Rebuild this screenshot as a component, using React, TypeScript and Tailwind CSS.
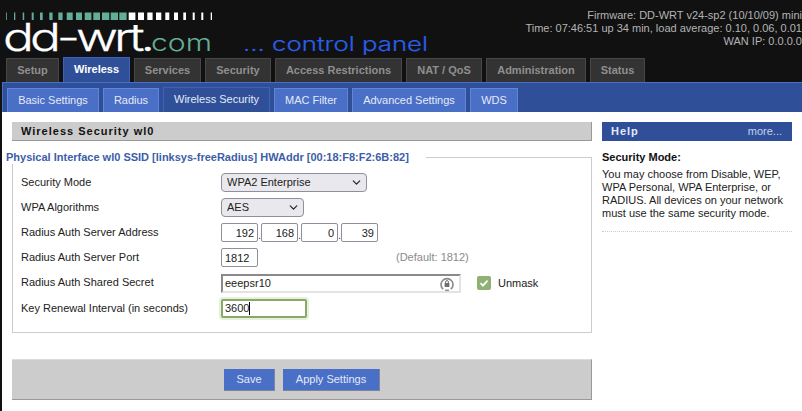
import React from "react";
import { ChevronDown } from "lucide-react";

const tealBars: [number, number][] = [[6,0.8],[14,1.3],[22.7,1.5],[31.7,2],[40,2.7],[49.3,3.3],[58.3,4.3],[66.7,6],[76,6],[84.7,6.7],[93.3,6.7],[102,7.3],[110.7,7.3],[119.3,7.3]];
const whiteBars: [number, number][] = [[128.7,6.7],[138,6],[147.3,5.3],[156,5.3],[165.3,4],[174,4],[183.3,2.7],[192.7,2],[201.3,2],[210.7,1.3]];

function Logo() {
  return (
    <svg width="440" height="57" className="block shrink-0 overflow-visible" style={{ fontFamily: "Inter, sans-serif" }}>
      {tealBars.map(([x, w]) => <rect key={x} x={x} y="12.5" width={w} height="7.5" fill="#62ae98" />)}
      {whiteBars.map(([x, w]) => <rect key={x} x={x} y="12.5" width={w} height="7.5" fill="#ffffff" />)}
      <text x="3" y="51" fontSize="38" fontWeight="300" letterSpacing="-3" fill="#ffffff" stroke="#ffffff" strokeWidth="0.3" textLength="148" lengthAdjust="spacingAndGlyphs">dd-wrt.</text>
      <text x="151" y="51" fontSize="23" fontWeight="300" fill="#62ae98" textLength="61" lengthAdjust="spacingAndGlyphs">com</text>
      <text x="243" y="50.5" fontSize="19.5" fontWeight="300" fill="#2a5fe8" stroke="#2a5fe8" strokeWidth="0.2" textLength="185" lengthAdjust="spacingAndGlyphs">... control panel</text>
    </svg>
  );
}

const mainTabs = [
  { label: "Setup", w: "w-[53px]" },
  { label: "Wireless", w: "w-[67px]", active: true },
  { label: "Services", w: "w-[67px]" },
  { label: "Security", w: "w-[66px]" },
  { label: "Access Restrictions", w: "w-[127px]" },
  { label: "NAT / QoS", w: "w-[76px]" },
  { label: "Administration", w: "w-[100px]" },
  { label: "Status", w: "w-[55px]" },
];

const subTabs = [
  { label: "Basic Settings", w: "w-[92px]" },
  { label: "Radius", w: "w-[56px]" },
  { label: "Wireless Security", w: "w-[107px]", active: true },
  { label: "MAC Filter", w: "w-[74px]" },
  { label: "Advanced Settings", w: "w-[114px]" },
  { label: "WDS", w: "w-[48px]" },
];

function Row({ label, children, h = "h-[25px]", labelPad = "" }: { label: string; children: React.ReactNode; h?: string; labelPad?: string }) {
  return (
    <div className={`flex items-center ${h}`}>
      <div className={`w-[200px] shrink-0 text-[#222] ${labelPad}`}>{label}</div>
      {children}
    </div>
  );
}

const inputCls = "h-[19px] w-[37px] rounded-[2px] border border-[#8f8f9d] bg-white text-[11px] outline-none";

function Pick({ value, w, children }: { value: string; w: string; children: string }) {
  return (
    <div className={`relative h-[19px] ${w}`}>
      <select defaultValue={value} className="h-full w-full appearance-none rounded-[4px] border border-[#8f8f9d] bg-[#e9e9ed] pl-[5px] text-[11px] text-[#222] outline-none">
        <option>{children}</option>
      </select>
      <ChevronDown size={13} strokeWidth={2.2} className="pointer-events-none absolute right-[4px] top-[3px] text-[#222]" />
    </div>
  );
}

export default function App() {
  return (
    <div className="flex h-[411px] w-[802px] flex-col overflow-hidden bg-[#111111] text-[11px] leading-[13px]" style={{ fontFamily: '"Liberation Sans", Arial, sans-serif' }}>
      <header className="flex h-[57px] justify-between">
        <Logo />
        <div className="whitespace-nowrap pt-[9px] text-right text-[11px] leading-[13px] text-[#b4b4b4]">
          <div>Firmware: DD-WRT v24-sp2 (10/10/09) mini</div>
          <div>Time: 07:46:51 up 34 min, load average: 0.10, 0.06, 0.01</div>
          <div>WAN IP: 0.0.0.0</div>
        </div>
      </header>

      <nav className="flex h-[25px] items-end gap-[4px] pl-[6px] text-[11px] font-bold">
        {mainTabs.map((t) =>
          t.active ? (
            <div key={t.label} className={`${t.w} flex h-[25px] items-start justify-center border border-b-0 border-[#3d62b8] bg-[#2f5099] pt-[5px] text-white`}>{t.label}</div>
          ) : (
            <div key={t.label} className={`${t.w} flex h-[24px] items-center justify-center border border-b-0 border-[#474747] bg-[#333333] text-[#8f8f8f]`}>{t.label}</div>
          )
        )}
      </nav>

      <div className="ml-[2px] flex h-[30px] items-end gap-[4px] border-t border-l border-[#4a6fc7] bg-[#2f5099] pl-[4px] text-[11px]">
        {subTabs.map((t) =>
          t.active ? (
            <div key={t.label} className={`${t.w} flex h-[25px] items-start justify-center border border-b-0 border-[#3d62b8] bg-[#2f5099] pt-[5px] text-[#e4eaf8]`}>{t.label}</div>
          ) : (
            <div key={t.label} className={`${t.w} flex h-[24px] items-center justify-center border border-b-0 border-[#6385d6] bg-[#4a6fc7] text-[#e4eaf8]`}>{t.label}</div>
          )
        )}
      </div>

      <main className="ml-[2px] flex flex-1 gap-[10px] bg-white pl-[10px] pt-[10px]">
        <section className="flex w-[580px] flex-col">
          <h2 className="flex h-[19px] items-center border-r border-b border-[#999999] bg-[#cccccc] pl-[9px] text-[11px] font-bold tracking-[1px] text-[#111]">Wireless Security wl0</h2>

          <fieldset className="mt-[10px] h-[182px] min-w-0 border border-[#cccccc] pl-[8px] text-[11px]">
            <legend className="-ml-[15px] pr-[17px] text-[11px] font-bold leading-[13px] text-[#3b5ea8]">Physical Interface wl0 SSID [linksys-freeRadius] HWAddr [00:18:F8:F2:6B:82]</legend>
            <div className="pt-[6px]">
              <Row label="Security Mode"><Pick value="WPA2 Enterprise" w="w-[146px]">WPA2 Enterprise</Pick></Row>
              <Row label="WPA Algorithms"><Pick value="AES" w="w-[83px]">AES</Pick></Row>
              <Row label="Radius Auth Server Address">
                <div className="flex items-center">
                  {["192", "168", "0", "39"].map((v, i) => (
                    <React.Fragment key={v}>
                      {i > 0 && <span className="w-[3px] self-end text-[#444]">.</span>}
                      <input readOnly defaultValue={v} className={`${inputCls} pr-[3px] text-right text-[#222]`} />
                    </React.Fragment>
                  ))}
                </div>
              </Row>
              <Row label="Radius Auth Server Port">
                <input readOnly defaultValue="1812" className={`${inputCls} pl-[3px] text-[#222]`} />
                <span className="ml-[138px] text-[#8a8a8a]">(Default: 1812)</span>
              </Row>
              <Row label="Radius Auth Shared Secret" h="h-[26px]" labelPad="pb-[2px]">
                <div className="relative h-[19px] w-[240px]">
                  <input readOnly defaultValue="eeepsr10" className="h-full w-full border-2 border-t-[#8a8a8a] border-l-[#8a8a8a] border-r-[#e3e3e3] border-b-[#e3e3e3] bg-white pl-[2px] text-[11px] text-[#222] outline-none" />
                  <svg width="14" height="14" viewBox="0 0 14 14" className="absolute right-[7px] top-[3px]">
                    <path d="M3.2 12.2a6 6 0 1 1 7.6 0" fill="none" stroke="#8c8c8c" strokeWidth="1.7" />
                    <path d="M5 13.3h4" stroke="#8c8c8c" strokeWidth="1.4" />
                    <rect x="4.6" y="6" width="4.8" height="4" rx="0.5" fill="#6f6f6f" />
                    <path d="M5.6 6V5a1.4 1.4 0 0 1 2.8 0v1" fill="none" stroke="#6f6f6f" />
                  </svg>
                </div>
                <div className="ml-[16px] flex h-[14px] w-[14px] items-center justify-center rounded-[2px] bg-[#8fb174]">
                  <svg width="10" height="10" viewBox="0 0 10 10"><path d="M1.5 5.2l2.4 2.4 4.6-5" fill="none" stroke="#ffffff" strokeWidth="1.8" /></svg>
                </div>
                <span className="ml-[7px] text-[#222]">Unmask</span>
              </Row>
              <Row label="Key Renewal Interval (in seconds)">
                <div className="flex h-[19px] w-[86px] items-center rounded-[2px] border-2 border-[#8aa86e] bg-white pl-[2px] text-[11px] text-[#222] shadow-[0_0_0_2px_#e6f1da]">
                  3600<span className="h-[13px] w-px bg-black" />
                </div>
              </Row>
            </div>
          </fieldset>

          <div className="mt-[26px] flex h-[41px] items-center justify-center gap-[8px] border-t border-r border-b border-t-[#dcdcdc] border-r-[#999999] border-b-[#999999] bg-[#cccccc] pl-[1px] text-[11px] text-[#e4eaf8]">
            <button className="h-[22px] w-[51px] border-r border-b border-[#7d8697] bg-[#4a6fc7]">Save</button>
            <button className="h-[22px] w-[97px] border-r border-b border-[#7d8697] bg-[#4a6fc7]">Apply Settings</button>
          </div>
        </section>

        <aside className="w-[190px] text-[11px] text-[#222]">
          <div className="flex h-[19px] items-center justify-between bg-[#2f5099] pl-[9px] pr-[10px] text-[#e4eaf8]">
            <span className="text-[11px] font-bold tracking-[1px]">Help</span>
            <span className="text-[11px] text-[#c6d2ee]">more...</span>
          </div>
          <div className="border-b border-dotted border-[#cccccc] pb-[11px] pt-[10px]">
            <div className="font-bold text-[#111]">Security Mode:</div>
            <p className="mt-[4px] leading-[13px]">You may choose from Disable, WEP, WPA Personal, WPA Enterprise, or RADIUS. All devices on your network must use the same security mode.</p>
          </div>
        </aside>
      </main>
    </div>
  );
}
